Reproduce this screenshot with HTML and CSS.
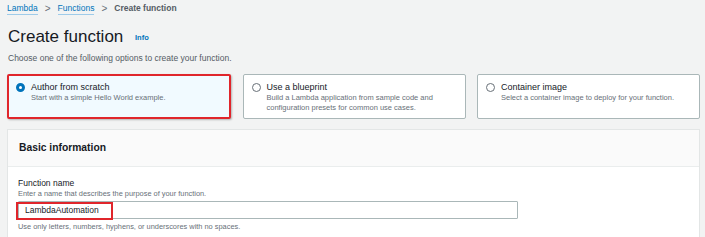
FILE: index.html
```html
<!DOCTYPE html>
<html>
<head>
    <title>Create function</title>
    <link rel="stylesheet" href="styles.css">
</head>
<body>
    <div class="page">
        <div class="breadcrumbs">
            <a href="#">Lambda</a>
            <span class="sep">&gt;</span>
            <a href="#">Functions</a>
            <span class="sep">&gt;</span>
            <span class="current">Create function</span>
        </div>
        <h1>Create function <span class="info">Info</span></h1>
        <p class="intro">Choose one of the following options to create your function.</p>

        <div class="options">
            <div class="option selected">
                <span class="radio checked"></span>
                <div>
                    <div class="option-title">Author from scratch</div>
                    <div class="option-desc">Start with a simple Hello World example.</div>
                </div>
            </div>
            <div class="option">
                <span class="radio"></span>
                <div>
                    <div class="option-title">Use a blueprint</div>
                    <div class="option-desc">Build a Lambda application from sample code and configuration presets for common use cases.</div>
                </div>
            </div>
            <div class="option">
                <span class="radio"></span>
                <div>
                    <div class="option-title">Container image</div>
                    <div class="option-desc">Select a container image to deploy for your function.</div>
                </div>
            </div>
        </div>

        <div class="panel">
            <div class="panel-header">Basic information</div>
            <div class="panel-body">
                <label for="fn_name">Function name</label>
                <div class="hint">Enter a name that describes the purpose of your function.</div>
                <div class="input-wrap">
                    <input type="text" id="fn_name" value="LambdaAutomation">
                    <span class="highlight"></span>
                </div>
                <div class="note">Use only letters, numbers, hyphens, or underscores with no spaces.</div>
            </div>
        </div>
    </div>
</body>
</html>
```
FILE: styles.css
```css
body {
    margin: 0;
    background-color: #f2f3f3;
    font-family: "Liberation Sans", Arial, sans-serif;
    color: #16191f;
    overflow: hidden;
}

.page {
    padding: 2px 5px 0 7px;
}

.breadcrumbs {
    font-size: 8.5px;
    line-height: 13px;
    display: flex;
    align-items: center;
    gap: 7px;
}

.breadcrumbs a {
    color: #0073bb;
    text-decoration: none;
    border-bottom: 1px solid #9fcbe9;
    line-height: 11px;
}

.breadcrumbs .sep {
    color: #687078;
    font-size: 10px;
}

.breadcrumbs .current {
    color: #545b64;
    font-weight: 700;
}

h1 {
    font-size: 17px;
    font-weight: 400;
    margin: 12px 0 0 1px;
    line-height: 20px;
}

.info {
    font-size: 7.5px;
    color: #0073bb;
    font-weight: 700;
    margin-left: 7px;
    vertical-align: middle;
}

.intro {
    font-size: 8.5px;
    color: #545b64;
    margin: 4px 0 0 1px;
    line-height: 12px;
}

.options {
    display: grid;
    grid-template-columns: 224px 223px 223px;
    justify-content: space-between;
    margin-top: 10px;
}

.option {
    display: flex;
    align-items: flex-start;
    gap: 6px;
    height: 45px;
    box-sizing: border-box;
    border: 1px solid #aab7b8;
    border-radius: 2px;
    background-color: #ffffff;
    padding: 6px 10px 0 8px;
}

.option.selected {
    border: 2px solid #e0252b;
    background-color: #f1faff;
    padding: 5px 9px 0 7px;
    box-shadow: 1px 1px 2px rgba(0, 0, 0, 0.25);
}

.radio {
    width: 9px;
    height: 9px;
    border: 1px solid #687078;
    border-radius: 50%;
    flex-shrink: 0;
    margin-top: 2px;
    box-sizing: border-box;
}

.radio.checked {
    border: 3px solid #0073bb;
    background-color: #ffffff;
}

.option-title {
    font-size: 9px;
    line-height: 12px;
    color: #16191f;
}

.option-desc {
    font-size: 7.5px;
    line-height: 10px;
    color: #687078;
}

.panel {
    margin-top: 10px;
    background-color: #ffffff;
    border: 1px solid #e3e6e6;
    border-bottom: none;
    height: 120px;
}

.panel-header {
    background-color: #fafafa;
    border-bottom: 1px solid #eaeded;
    font-size: 10.3px;
    font-weight: 700;
    padding: 11px 11px;
    line-height: 14px;
}

.panel-body {
    padding: 11px 11px 0 10px;
}

label {
    display: block;
    font-size: 8.5px;
    line-height: 11px;
    color: #16191f;
}

.hint {
    font-size: 7.4px;
    line-height: 10px;
    color: #687078;
}

.input-wrap {
    position: relative;
    width: 500px;
    margin-top: 2px;
}

input[type="text"] {
    display: block;
    width: 100%;
    height: 18px;
    box-sizing: border-box;
    border: 1px solid #aab7b8;
    border-radius: 1px;
    font-family: "Liberation Sans", Arial, sans-serif;
    font-size: 8.5px;
    padding: 0 6px;
    color: #16191f;
    margin: 0;
}

.highlight {
    position: absolute;
    left: -2px;
    top: 1px;
    width: 97px;
    height: 18px;
    border: 2px solid #e0252b;
    box-sizing: border-box;
}

.note {
    font-size: 7.4px;
    line-height: 10px;
    color: #687078;
    margin-top: 3px;
}
```
